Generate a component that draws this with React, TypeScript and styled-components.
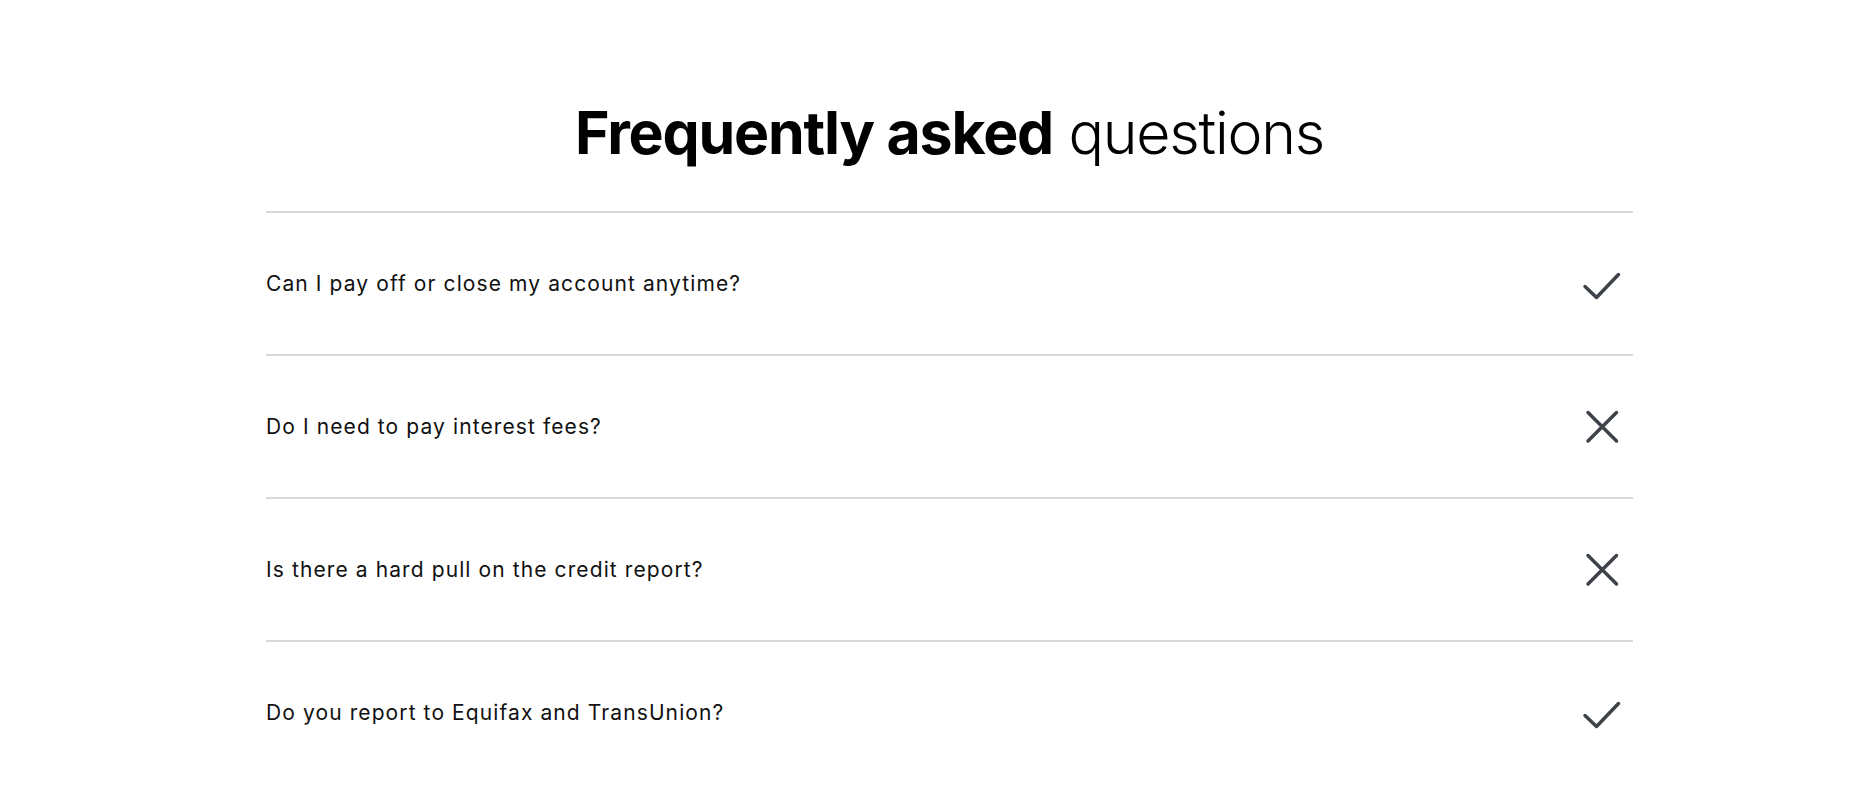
import React from "react";
import styled, { createGlobalStyle } from "styled-components";

const GlobalStyle = createGlobalStyle`
  html, body {
    margin: 0;
    padding: 0;
    background: #ffffff;
  }
  body {
    font-family: Inter, "Noto Sans", sans-serif;
    color: #111111;
    -webkit-font-smoothing: antialiased;
  }
`;

const Page = styled.main`
  display: flex;
  flex-direction: column;
  padding: 0 243px 0 266px;
`;

const Title = styled.h1`
  margin: 0;
  padding-top: 103px;
  height: 211px;
  box-sizing: border-box;
  text-align: center;
  font-size: 59px;
  line-height: 60px;
  letter-spacing: -1.2px;
  color: #000000;
  font-weight: 300;
`;

const Strong = styled.span`
  font-weight: 700;
`;

const List = styled.div`
  display: flex;
  flex-direction: column;
`;

const Row = styled.div`
  display: flex;
  align-items: center;
  justify-content: space-between;
  height: 143px;
  box-sizing: border-box;
  border-top: 2px solid #d8d8db;
  padding-right: 11px;
`;

const Question = styled.span`
  font-size: 21px;
  font-weight: 400;
  letter-spacing: 1.1px;
  color: #111111;
`;

const IconBox = styled.svg<{ $shift: number }>`
  width: 40px;
  height: 40px;
  flex: none;
  transform: translateY(${(p) => p.$shift}px);
`;

const CheckIcon = () => (
  <IconBox viewBox="0 0 40 40" $shift={1} aria-hidden>
    <polyline
      points="3,21.5 14.5,32.5 36.5,9.5"
      fill="none"
      stroke="#3e4249"
      strokeWidth={3.5}
      strokeLinecap="round"
      strokeLinejoin="round"
    />
  </IconBox>
);

const CrossIcon = () => (
  <IconBox viewBox="0 0 40 40" $shift={0} aria-hidden>
    <path
      d="M6 5.5 L34.5 34 M34.5 5.5 L6 34"
      fill="none"
      stroke="#3e4249"
      strokeWidth={3.5}
      strokeLinecap="round"
    />
  </IconBox>
);

const faqs: { q: string; yes: boolean }[] = [
  { q: "Can I pay off or close my account anytime?", yes: true },
  { q: "Do I need to pay interest fees?", yes: false },
  { q: "Is there a hard pull on the credit report?", yes: false },
  { q: "Do you report to Equifax and TransUnion?", yes: true },
];

export default function App() {
  return (
    <>
      <GlobalStyle />
      <Page>
        <Title>
          <Strong>Frequently asked</Strong> questions
        </Title>
        <List>
          {faqs.map((f) => (
            <Row key={f.q}>
              <Question>{f.q}</Question>
              {f.yes ? <CheckIcon /> : <CrossIcon />}
            </Row>
          ))}
        </List>
      </Page>
    </>
  );
}
